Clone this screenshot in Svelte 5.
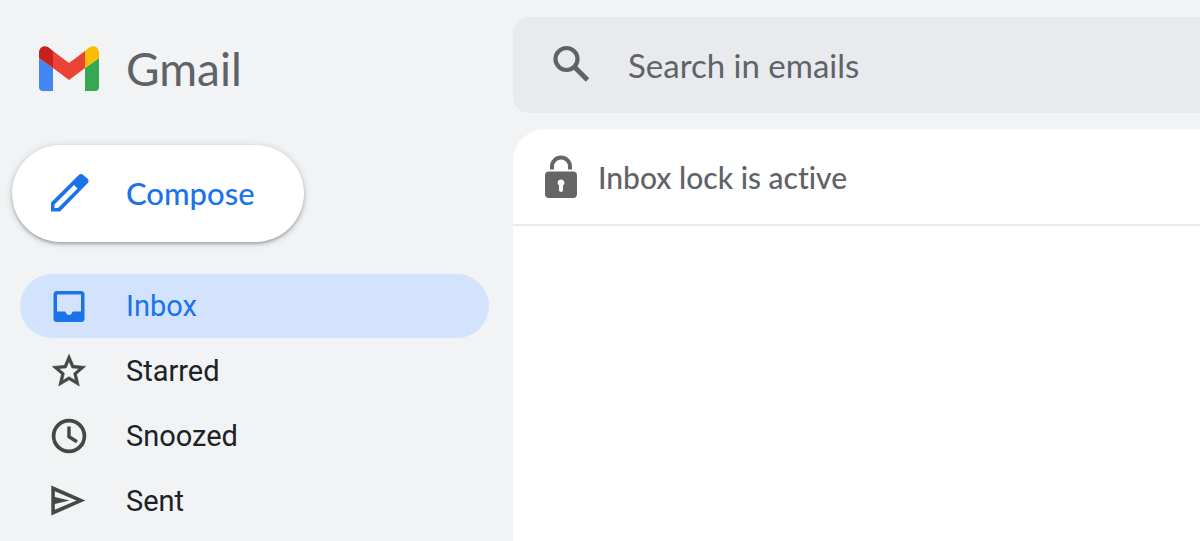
<script>
	const folders = [
		{ name: "Inbox", icon: "inbox" },
		{ name: "Starred", icon: "star" },
		{ name: "Snoozed", icon: "clock" },
		{ name: "Sent", icon: "sent" },
	];

	let active = $state("Inbox");
	let query = $state("");
</script>

<div class="app">
	<aside class="sidebar">
		<a class="brand" href="#inbox">
			<svg class="logo" viewBox="0 0 60 45" aria-hidden="true">
				<path fill="#4285f4" d="M0 12v29a4 4 0 0 0 4 4h10V22z" />
				<path fill="#34a853" d="M60 12v29a4 4 0 0 1-4 4H46V22z" />
				<path fill="#ea4335" d="M14 5l16 12L46 5v17L30 34 14 22z" />
				<path fill="#c5221f" d="M0 12V7C0 1 6-2 11 2.500L14 5v17z" />
				<path fill="#fbbc04" d="M60 12V7c0-6-6-9-11-4.500L46 5v17z" />
			</svg>
			<span>Gmail</span>
		</a>

		<button class="compose" type="button">
			<svg class="icon" viewBox="0 0 40 40" aria-hidden="true">
				<path
					fill="currentColor"
					fill-rule="evenodd"
					d="M2 38.500V29.500L29.500 2.300a3.500 3.500 0 0 1 5 0L38.300 5.500a3.500 3.500 0 0 1 0 5L11 38.500zM5.500 31.500V35H9L28.500 15.500 25 12z"
				/>
			</svg>
			<span>Compose</span>
		</button>

		<nav aria-label="Folders">
			{#each folders as f (f.name)}
				<a
					class="folder"
					class:active={active === f.name}
					href={"#" + f.name.toLowerCase()}
					onclick={() => (active = f.name)}
				>
					<svg class="icon" viewBox="0 0 40 40" aria-hidden="true">
						{#if f.icon === "inbox"}
							<path
								fill="currentColor"
								fill-rule="evenodd"
								d="M8 5h24a3.500 3.500 0 0 1 3.500 3.500v24A3.500 3.500 0 0 1 32 36H8a3.500 3.500 0 0 1-3.500-3.500v-24A3.500 3.500 0 0 1 8 5zM8 8.500v17h7.500c1 0 1.200.6 1.500 1.500 1 2.600 5 2.600 6 0 .3-.9.500-1.500 1.500-1.500H32v-17z"
							/>
						{:else if f.icon === "star"}
							<path
								fill="currentColor"
								stroke="currentColor"
								stroke-width="0.6"
								d="M36.670 15.400l-11.980-1.030L20 3.330l-4.680 11.050L3.330 15.400l9.100 7.880L9.700 35 20 28.780 30.300 35l-2.720-11.720zM20 25.670l-6.270 3.780 1.670-7.130-5.530-4.800 7.300-.63L20 10.170l2.850 6.730 7.300.63-5.530 4.800 1.670 7.130z"
							/>
						{:else if f.icon === "clock"}
							<circle cx="20" cy="20" r="15.400" fill="none" stroke="currentColor" stroke-width="3.700" />
							<path fill="none" stroke="currentColor" stroke-width="3.400" d="M20 10.500v10.300l8 5" />
						{:else}
							<path
								fill="currentColor"
								fill-rule="evenodd"
								d="M2.300 4.500L36.300 19.500 2.300 34.500zM5.800 10.300V16L20.500 19.500 5.800 23V28.800L27.500 19.500z"
							/>
						{/if}
					</svg>
					<span>{f.name}</span>
				</a>
			{/each}
		</nav>
	</aside>

	<main>
		<form class="search" role="search" onsubmit={(e) => e.preventDefault()}>
			<button type="submit" aria-label="Search">
				<svg class="icon" viewBox="0 0 40 40" aria-hidden="true">
					<circle cx="15.500" cy="14" r="11" fill="none" stroke="currentColor" stroke-width="4.200" />
					<path fill="none" stroke="currentColor" stroke-width="5" d="M23 21.500L36.500 35" />
				</svg>
			</button>
			<input type="text" placeholder="Search in emails" aria-label="Search in emails" bind:value={query} />
		</form>

		<section class="panel">
			<header>
				<svg class="lock" viewBox="0 0 32 44" aria-hidden="true">
					<path fill="none" stroke="currentColor" stroke-width="4" d="M7 14.500v-3a9 9 0 0 1 18 0v3" />
					<path
						fill="currentColor"
						fill-rule="evenodd"
						d="M4 16.500h24a4 4 0 0 1 4 4v18.500a4 4 0 0 1-4 4H4a4 4 0 0 1-4-4V20.500a4 4 0 0 1 4-4zM16 24.500a3.300 3.300 0 0 0-2 6v4.500a2 2 0 0 0 4 0V30.500a3.300 3.300 0 0 0-2-6z"
					/>
				</svg>
				<h1>Inbox lock is active</h1>
			</header>
		</section>
	</main>
</div>

<style>
	:global(body) {
		margin: 0;
		background: #f1f3f5;
	}
	.app {
		display: grid;
		grid-template-columns: 513px 1fr;
		min-height: 100vh;
		box-sizing: border-box;
		background: #f1f3f5;
		color: #202124;
		font-family: Lato, "Liberation Sans", sans-serif;
		font-variant-ligatures: none;
	}
	.sidebar {
		padding: 30px 24px 0 12px;
	}
	.icon {
		width: 40px;
		height: 40px;
		flex: none;
		display: block;
	}
	.brand {
		display: flex;
		align-items: center;
		gap: 27px;
		height: 76px;
		padding-left: 27px;
		color: #5f6368;
		font-size: 46px;
		text-decoration: none;
	}
	.logo {
		width: 60px;
		height: 45px;
	}
	.compose {
		display: flex;
		align-items: center;
		gap: 37px;
		height: 97px;
		margin: 39px 0 32px;
		padding: 0 49px 2px 37px;
		border: 0;
		border-radius: 49px;
		background: #fff;
		box-shadow: 0 2px 3px rgba(60, 64, 67, 0.35), 0 1px 6px 2px rgba(60, 64, 67, 0.12);
		color: #1a73e8;
		font: 500 31px/40px Lato, "Liberation Sans", sans-serif;
		cursor: pointer;
	}
	nav {
		display: grid;
		gap: 1px;
		padding-left: 8px;
	}
	.folder {
		display: flex;
		align-items: center;
		gap: 37px;
		height: 64px;
		padding-left: 29px;
		border-radius: 32px;
		color: #202124;
		font: 29px/40px Roboto, sans-serif;
		text-decoration: none;
	}
	.folder .icon {
		color: #444746;
	}
	.folder.active {
		background: #d3e2fd;
	}
	.folder.active,
	.folder.active .icon {
		color: #1a73e8;
	}
	main {
		display: flex;
		flex-direction: column;
		gap: 16px;
		padding-top: 17px;
		min-width: 0;
	}
	.search {
		display: flex;
		align-items: center;
		gap: 37px;
		height: 96px;
		padding-left: 38px;
		border-radius: 16px 0 0 16px;
		background: #e8eaed;
		color: #5f6368;
	}
	.search button {
		padding: 0;
		border: 0;
		background: none;
		color: inherit;
	}
	.search input {
		flex: 1;
		min-width: 0;
		padding: 0;
		border: 0;
		outline: 0;
		background: none;
		color: inherit;
		font: 33px/40px Lato, "Liberation Sans", sans-serif;
	}
	.search input::placeholder {
		color: inherit;
		opacity: 1;
	}
	.panel {
		flex: 1;
		border-radius: 32px 0 0 0;
		background: #fff;
	}
	.panel header {
		display: flex;
		align-items: center;
		gap: 21px;
		height: 95px;
		padding-left: 32px;
		border-bottom: 2px solid #e8eaed;
		color: #666;
	}
	.lock {
		width: 32px;
		height: 44px;
	}
	h1 {
		margin: 0;
		color: #5f6368;
		font-size: 30px;
		font-weight: 500;
		line-height: 40px;
	}
</style>
